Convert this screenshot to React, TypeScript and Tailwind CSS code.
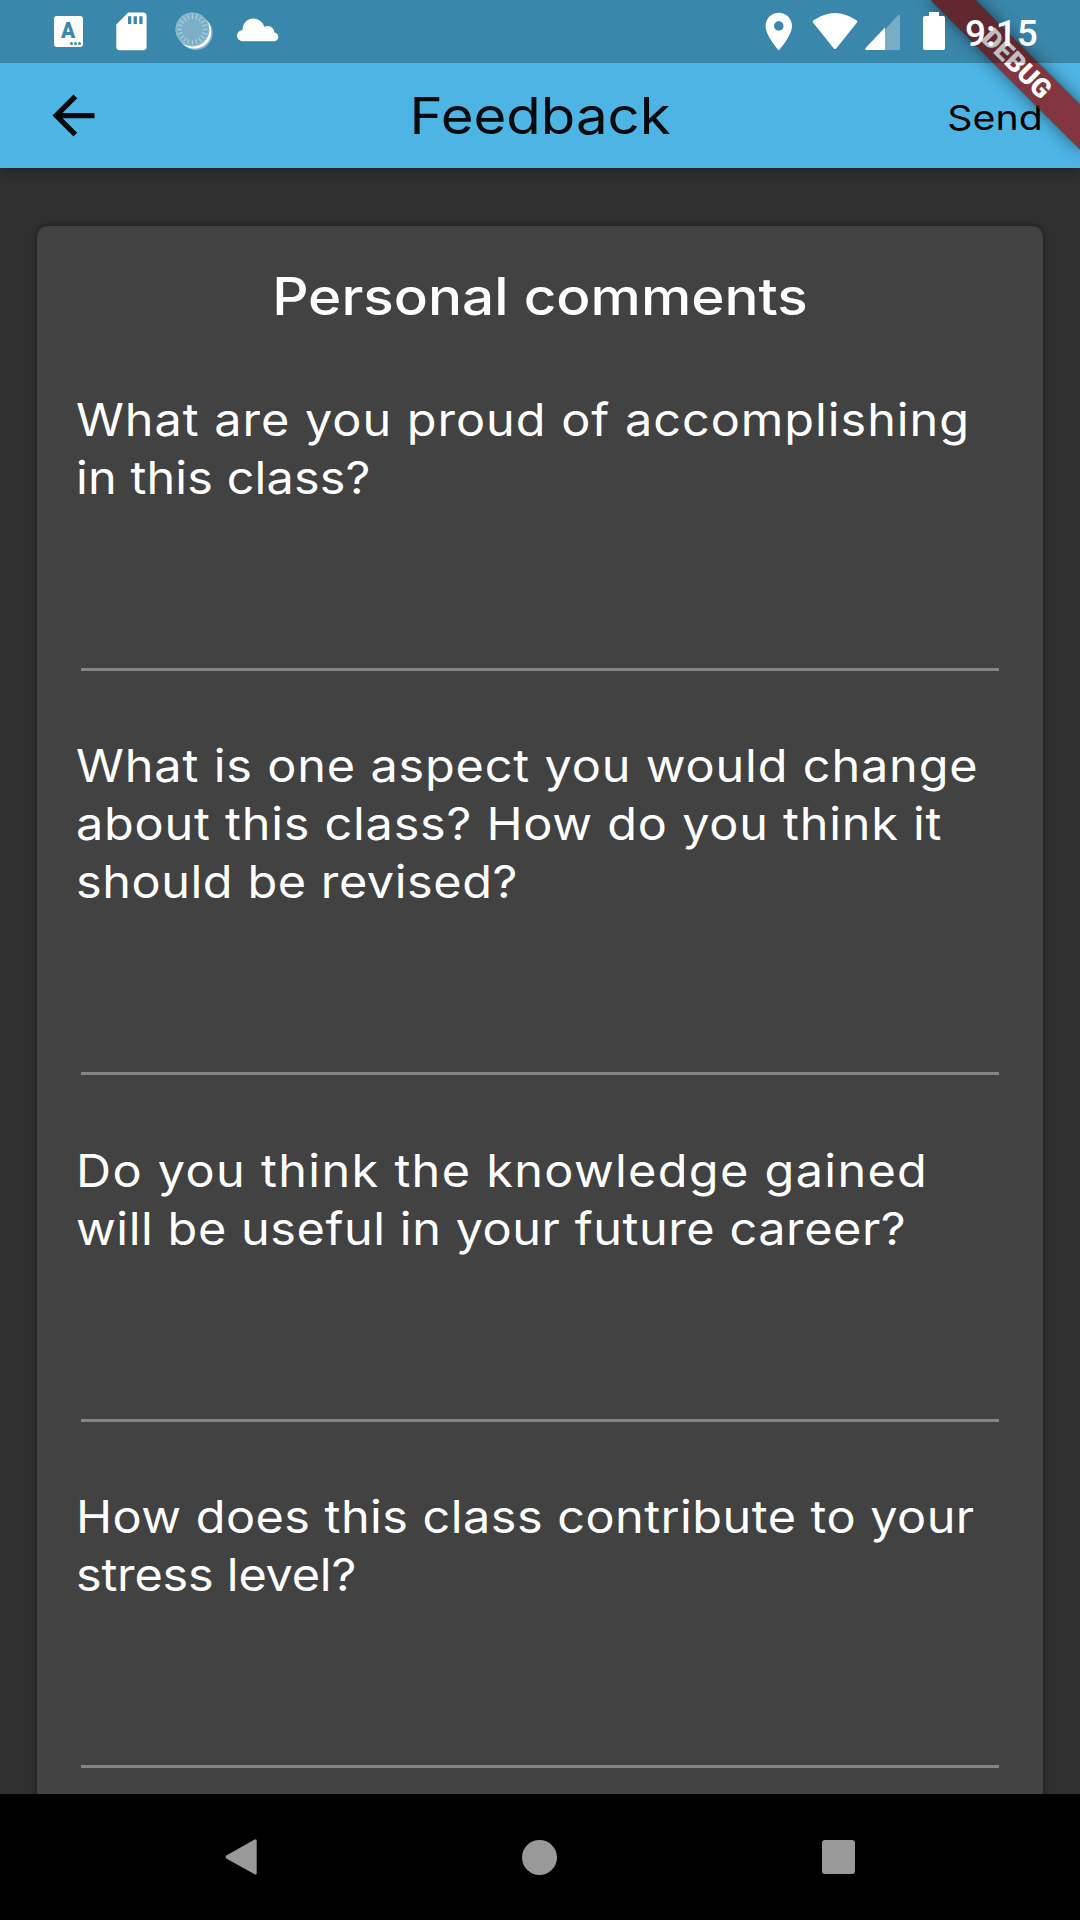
type Line = { text: string; spacing: string };

const QUESTIONS: Line[][] = [
  [
    { text: "What are you proud of accomplishing", spacing: "tracking-[0.9px]" },
    { text: "in this class?", spacing: "tracking-[0.1px]" },
  ],
  [
    { text: "What is one aspect you would change", spacing: "tracking-[0.77px]" },
    { text: "about this class? How do you think it", spacing: "tracking-[0.7px]" },
    { text: "should be revised?", spacing: "tracking-[0.52px]" },
  ],
  [
    { text: "Do you think the knowledge gained", spacing: "tracking-[1.22px]" },
    { text: "will be useful in your future career?", spacing: "tracking-[0.52px]" },
  ],
  [
    { text: "How does this class contribute to your", spacing: "tracking-[0.43px]" },
    { text: "stress level?", spacing: "tracking-[-0.2px]" },
  ],
];

const TICKS = Array.from({ length: 20 }, (_, i) => i * 18);

function KeyboardIcon() {
  return (
    <div className="relative ml-[54px] mt-4 h-[31px] w-[29px] rounded-[3px] bg-white">
      <span className="absolute left-0 top-[3px] w-[28px] scale-x-[0.95] text-center font-['Roboto',sans-serif] text-[22px] leading-[24px] font-black text-[#3a88ac]">
        A
      </span>
      <div className="absolute right-[2px] bottom-[2px] flex gap-[1.4px]">
        <i className="size-[2.8px] rounded-full bg-[#3a88ac]" />
        <i className="size-[2.8px] rounded-full bg-[#3a88ac]" />
        <i className="size-[2.8px] rounded-full bg-[#3a88ac]" />
      </div>
    </div>
  );
}

function SdCardIcon() {
  return (
    <svg className="mt-3 ml-[33px] h-[39px] w-[31px]" viewBox="0 0 31 39" fill="#fff">
      <path
        fillRule="evenodd"
        d="M12.2.6H27.3A3.4 3.4 0 0 1 30.6 4V34.8A3.4 3.4 0 0 1 27.3 38.2H3.6A3.4 3.4 0 0 1 .3 34.8V12.4ZM12 4.3V12H15.3V4.3ZM17.6 4.3V12H20.9V4.3ZM23.3 4.3V12H26.6V4.3Z"
      />
    </svg>
  );
}

function SpinnerIcon() {
  return (
    <svg className="mt-3 ml-[28px] h-[39px] w-[39px]" viewBox="0 0 39 39">
      <circle cx="20.7" cy="21" r="17" fill="#fff" opacity="0.4" />
      <circle cx="19.5" cy="19.8" r="16.8" fill="#fff" />
      <circle cx="17.4" cy="17.4" r="17" fill="#7baec7" />
      {TICKS.map((deg) => (
        <path
          key={deg}
          d="M17.4 2V7"
          stroke="#a9cbdb"
          strokeWidth="1.2"
          transform={`rotate(${deg} 17.4 17.4)`}
        />
      ))}
      <circle cx="17.4" cy="17.4" r="16.4" fill="none" stroke="#94bdd1" strokeWidth="1" />
    </svg>
  );
}

function CloudIcon() {
  return (
    <svg className="mt-[18px] ml-[22.5px] h-6 w-[42px]" viewBox="0 0 42 24" fill="#fff">
      <circle cx="5.6" cy="17.6" r="5.6" />
      <circle cx="16.5" cy="11.6" r="11" />
      <circle cx="30.5" cy="15" r="7" />
      <circle cx="37" cy="18.9" r="4.3" />
      <path d="M5.6 15H37V23.2H5.6Z" />
    </svg>
  );
}

function StatusBar() {
  return (
    <div className="absolute inset-x-0 top-0 flex h-[63px] items-start bg-black/25">
      <KeyboardIcon />
      <SdCardIcon />
      <SpinnerIcon />
      <CloudIcon />
      <div className="flex-1" />
      <svg className="mt-[8.7px] h-[45.2px] w-[45.6px]" viewBox="0 0 24 24" fill="#fff">
        <path d="M12 2C8.13 2 5 5.13 5 9c0 5.25 7 13 7 13s7-7.75 7-13c0-3.87-3.13-7-7-7zm0 9.5c-1.38 0-2.5-1.12-2.5-2.5s1.12-2.5 2.5-2.5 2.5 1.12 2.5 2.5-1.12 2.5-2.5 2.5z" />
      </svg>
      <svg className="mt-3 ml-[10px] h-[38px] w-[46px]" viewBox="0 0 46 38" fill="#fff">
        <path d="M1.2 8.6Q23 -6.6 44.8 8.6Q45.8 9.4 45 10.4L24.6 36Q23 37.8 21.4 36L1 10.4Q.2 9.4 1.2 8.6Z" />
      </svg>
      <svg className="mt-[14px] ml-[7px] h-9 w-[35px]" viewBox="0 0 35 36" fill="#fff">
        <path d="M20 15.5L32.7 1.6Q35 0 35 2.4V34.4Q35 36 33.4 36H20Z" opacity="0.32" />
        <path d="M20 13.5V36H1.2Q-.6 35.6 .6 34Z" />
      </svg>
      <svg className="mt-3 ml-[23px] h-[38px] w-[22px]" viewBox="0 0 22 38" fill="#fff">
        <path d="M6 0H16V4H20.2A1.8 1.8 0 0 1 22 5.8V36.2A1.8 1.8 0 0 1 20.2 38H1.8A1.8 1.8 0 0 1 0 36.2V5.8A1.8 1.8 0 0 1 1.8 4H6Z" />
      </svg>
      <span className="mt-[12px] mr-[41px] ml-[20px] w-[74px] font-['Roboto',sans-serif] text-[37px] leading-[44px] font-medium whitespace-nowrap text-white">
        9:15
      </span>
    </div>
  );
}

function DebugRibbon() {
  return (
    <div className="absolute top-0 right-0 size-[200px] overflow-hidden">
      <div className="absolute top-[73.5px] left-[95px] h-[31.5px] w-[210px] origin-[105px_-73.5px] rotate-45 bg-black/45 shadow-[0_0_16px_rgba(0,0,0,0.5)]">
        <div className="h-full bg-[#b71c1c]/63 text-center font-['Roboto',sans-serif] text-[26.8px] leading-[32px] font-black text-white">
          DEBUG
        </div>
      </div>
    </div>
  );
}

function AppBar() {
  return (
    <header className="relative z-10 flex h-[168px] items-center bg-[#4db4e4] pt-[63px] shadow-[0_4px_12px_rgba(0,0,0,0.28)]">
      <div className="flex flex-1 items-center">
        <svg className="ml-[42px] size-[63px]" viewBox="0 0 24 24" fill="#050a0c">
          <path d="M20 11H7.83l5.59-5.59L12 4l-8 8 8 8 1.41-1.41L7.83 13H20v-2z" />
        </svg>
      </div>
      <h1 className="mt-px scale-x-[1.105] text-[51px] leading-[60px] font-normal text-[#050a0c]">Feedback</h1>
      <div className="flex flex-1 justify-end">
        <span className="mt-[4px] mr-[37px] origin-right scale-x-[1.14] text-[34.5px] leading-10 font-normal text-black">
          Send
        </span>
      </div>
    </header>
  );
}

function Question({ lines }: { lines: Line[] }) {
  return (
    <section>
      <div className="pl-[38.5px] text-[45px] leading-[58px] font-normal">
        {lines.map((line) => (
          <p key={line.text} className={`origin-left scale-x-[1.08] whitespace-nowrap ${line.spacing}`}>
            {line.text}
          </p>
        ))}
      </div>
      <div className="mx-[44px] mt-[161px] mb-[66.3px] h-[3px] bg-[#858585]" />
    </section>
  );
}

function NavigationBar() {
  return (
    <nav className="relative z-10 flex h-[126px] items-center bg-black pl-[225px]">
      <svg className="h-9 w-8" viewBox="0 0 32 36" fill="#999">
        <path d="M29.2.8Q31.7-.6 31.7 2V34Q31.7 36.8 29.2 35L1.3 19.6Q-.2 18 1.3 16.4Z" />
      </svg>
      <div className="ml-[265px] size-[35px] rounded-full bg-[#999]" />
      <div className="ml-[264.5px] size-[33.5px] rounded-[3px] bg-[#999]" />
    </nav>
  );
}

export default function App() {
  return (
    <div className="relative flex h-[1920px] w-[1080px] flex-col overflow-hidden bg-[#303030] font-['Inter',sans-serif]">
      <AppBar />
      <main className="h-[1626px] overflow-hidden px-[37px] pt-[57.5px]">
        <div className="h-[1700px] rounded-t-[10.5px] bg-[#424242] pt-[40.5px] text-white shadow-[0_0_6px_rgba(0,0,0,0.5)]">
          <h2 className="mb-[65px] scale-x-[1.1] text-center text-[51.5px] leading-[60px] font-medium">
            Personal comments
          </h2>
          {QUESTIONS.map((lines) => (
            <Question key={lines[0].text} lines={lines} />
          ))}
        </div>
      </main>
      <NavigationBar />
      <div className="absolute inset-x-0 top-0 z-20">
        <DebugRibbon />
        <StatusBar />
      </div>
    </div>
  );
}
